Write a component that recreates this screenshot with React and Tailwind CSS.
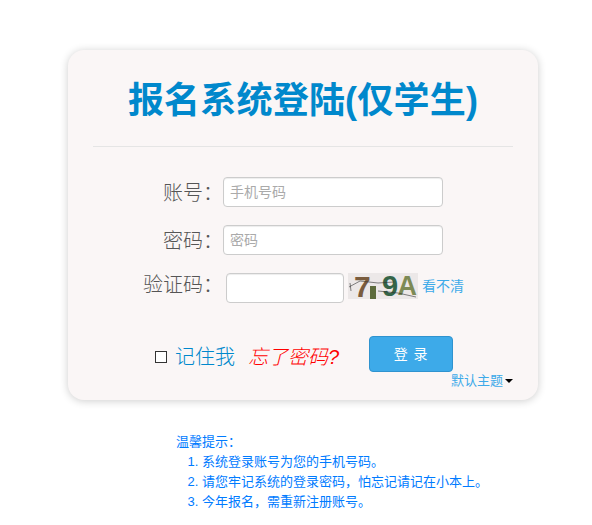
import React from "react";

const fonts = "font-['Liberation_Sans','Noto_Sans_CJK_SC',sans-serif]";

function Field({ label, placeholder, type = "text" }) {
  return (
    <div className="flex items-center h-[30px]">
      <label className="w-[155px] mt-[1px] text-right text-[20px] font-light leading-[30px] text-[#555]">{label}</label>
      <input
        type={type}
        placeholder={placeholder}
        className="w-[220px] h-[30px] bg-white border border-[#ccc] rounded-[4px] px-[6px] text-[14px] text-[#555] placeholder:text-[#aaa] shadow-[inset_0_1px_1px_rgba(0,0,0,0.075)] outline-none"
      />
    </div>
  );
}

function Captcha() {
  return (
    <svg width="70" height="26" viewBox="0 0 70 26" overflow="visible" className="ml-[4px] -mt-[4px] bg-[#ece8e8] shrink-0">
      <text x="6" y="24" fontFamily="Liberation Sans" fontWeight="700" fontSize="30" fill="#7a5c3e">7</text>
      <rect x="22" y="13" width="6" height="13" fill="#5d6b3c" />
      <text x="34" y="23" fontFamily="Liberation Sans" fontWeight="700" fontSize="29" fill="#356548">9</text>
      <text x="49.5" y="22" fontFamily="Liberation Sans" fontWeight="700" fontSize="27" fill="#7d8a55">A</text>
      <path d="M1 14 L12 8 L30 10 L46 9 M30 18 L50 20 L68 24 M2 10 L3 18" fill="none" stroke="#333" strokeWidth="0.6" />
    </svg>
  );
}

export default function App() {
  return (
    <div className={`min-h-[525px] bg-white ${fonts}`}>
      <div className="ml-[68px] pt-[50px] w-[470px]">
        <form className="relative h-[350px] bg-[#faf6f6] rounded-[16px] shadow-[0_1px_8px_rgba(0,0,0,0.2)]">
          <h1 className="pt-[25px] h-[96px] text-center text-[36px] tracking-[0.2px] leading-[52px] font-bold text-[#0088cc]">
            报名系统登陆(仅学生)
          </h1>
          <div className="mx-[25px] border-t border-[#e5e5e5]" />

          <div className="pt-[30px] flex flex-col gap-[18px]">
            <Field label="账号：" placeholder="手机号码" />
            <Field label="密码：" placeholder="密码" type="password" />
            <div className="flex items-center h-[30px]">
              <label className="w-[155px] -mt-[7px] text-right text-[20px] font-light leading-[22px] text-[#555]">验证码：</label>
              <input
                type="text"
                className="ml-[3px] w-[118px] h-[30px] bg-white border border-[#ccc] rounded-[4px] shadow-[inset_0_1px_1px_rgba(0,0,0,0.075)] outline-none"
              />
              <Captcha />
              <a className="ml-[4px] -mt-[5px] text-[14px] leading-[20px] text-[#3daae9]">看不清</a>
            </div>
          </div>

          <div className="flex items-center pt-[33px] pl-[87px]">
            <span className="mt-[6px] w-[12px] h-[12px] border border-[#333] bg-white shrink-0" />
            <span className="ml-[8px] mt-[6px] text-[20px] font-light leading-[28px] text-[#0088cc]">记住我</span>
            <a className="ml-[13px] mt-[6px] text-[20px] font-light italic leading-[28px] text-[#ff0000]">忘了密码?</a>
            <button
              type="button"
              className="ml-[30px] w-[84px] h-[36px] bg-[#3daae9] border border-[#2f93cf] rounded-[4px] text-[14px] tracking-[1px] text-white"
            >
              登 录
            </button>
          </div>

          <div className="absolute right-[25px] bottom-[10px] flex items-center text-[13px] leading-[18px] text-[#3daae9]">
            默认主题
            <span className="ml-[2px] border-x-[4px] border-x-transparent border-t-[4px] border-t-black" />
          </div>
        </form>

        <div className="ml-[108px] mt-[32px] text-[13px] leading-[20px] text-[#007bff]">
          <p>温馨提示：</p>
          <ol className="pl-[26px] list-decimal">
            <li>系统登录账号为您的手机号码。</li>
            <li>请您牢记系统的登录密码，怕忘记请记在小本上。</li>
            <li>今年报名，需重新注册账号。</li>
          </ol>
        </div>
      </div>
    </div>
  );
}
